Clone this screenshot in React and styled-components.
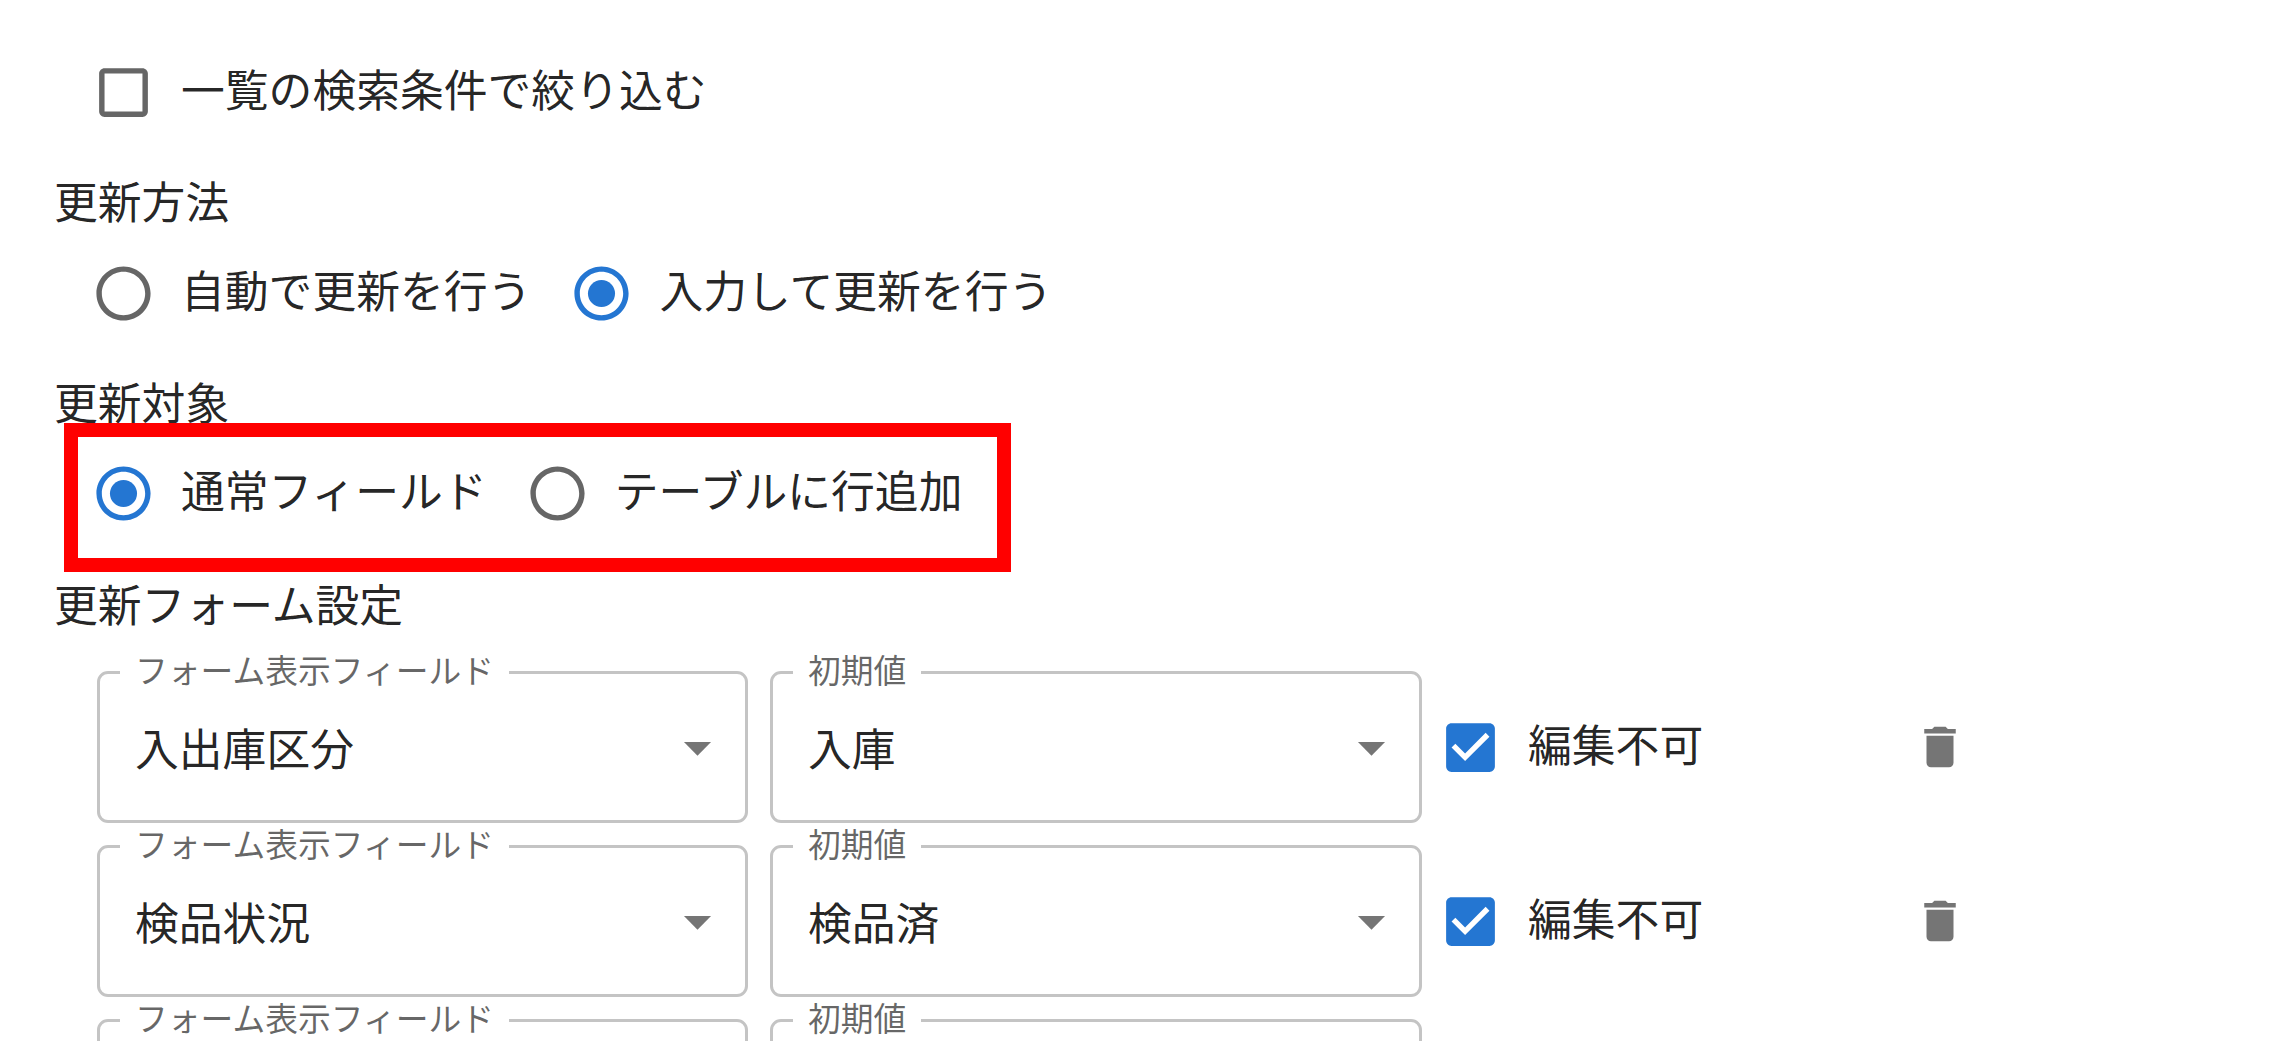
import React from "react";
import styled, { createGlobalStyle } from "styled-components";

const GlobalStyle = createGlobalStyle`
	html, body {
		margin: 0;
		padding: 0;
		background: #fff;
	}
	body {
		font-family: Roboto, "Noto Sans CJK JP", sans-serif;
		font-size: 43.8px;
		color: rgba(0, 0, 0, 0.87);
	}
`;

const Page = styled.div`
	height: 1041px;
	overflow: hidden;
	padding: 60px 0 0 54px;
	box-sizing: border-box;
`;

const Heading = styled.div`
	height: 65px;
	line-height: 65px;
	margin-top: ${(p) => p.$top}px;
`;

const OptionRow = styled.div`
	position: relative;
	display: flex;
	align-items: center;
	gap: 38px;
	height: 65px;
	margin-top: ${(p) => p.$top || 0}px;
	padding-left: 37px;
`;

const Option = styled.label`
	display: flex;
	align-items: center;
	gap: 25px;
	line-height: 67px;
	white-space: nowrap;
`;

const Highlight = styled.div`
	position: absolute;
	left: 10px;
	top: -38px;
	width: 947px;
	height: 149px;
	box-sizing: border-box;
	border: 14px solid #ff0000;
	pointer-events: none;
`;

const Icon = styled.svg`
	width: ${(p) => p.$size || 65}px;
	height: ${(p) => p.$size || 65}px;
	flex: none;
	display: block;
	fill: ${(p) => p.$color || "#666666"};
`;

const FieldList = styled.div`
	display: flex;
	flex-direction: column;
	gap: 22px;
	margin-top: 31px;
	padding-left: 43px;
`;

const FieldRow = styled.div`
	display: flex;
	align-items: center;
	flex: none;
	height: 152px;
`;

const SelectBox = styled.div`
	position: relative;
	display: flex;
	align-items: center;
	justify-content: space-between;
	width: ${(p) => p.$width}px;
	height: 152px;
	flex: none;
	box-sizing: border-box;
	margin-right: ${(p) => p.$gap}px;
	padding: 0 33px 0 35px;
	border: 3px solid #c4c4c4;
	border-radius: 11px;
`;

const FloatLabel = styled.span`
	position: absolute;
	left: 20px;
	top: -24px;
	padding: 0 15px;
	background: #fff;
	color: rgba(0, 0, 0, 0.6);
	font-size: 32.8px;
	line-height: 44px;
	white-space: nowrap;
`;

const Arrow = styled.svg`
	width: 65px;
	height: 65px;
	flex: none;
	margin-right: -18px;
	fill: #757575;
`;

const EditOption = styled(Option)`
	width: 475px;
	flex: none;
`;

const CHECK_EMPTY =
	"M19 5v14H5V5h14m0-2H5c-1.1 0-2 .9-2 2v14c0 1.1.9 2 2 2h14c1.1 0 2-.9 2-2V5c0-1.1-.9-2-2-2z";
const CHECK_FILLED =
	"M19 3H5c-1.11 0-2 .9-2 2v14c0 1.1.89 2 2 2h14c1.11 0 2-.89 2-2V5c0-1.1-.89-2-2-2zm-9 14l-5-5 1.41-1.41L10 14.17l7.59-7.59L19 8l-9 9z";
const RADIO_RING =
	"M12 2C6.48 2 2 6.48 2 12s4.48 10 10 10 10-4.48 10-10S17.52 2 12 2zm0 18c-4.42 0-8-3.58-8-8s3.58-8 8-8 8 3.58 8 8-3.58 8-8 8z";
const TRASH =
	"M6 19c0 1.1.9 2 2 2h8c1.1 0 2-.9 2-2V7H6v12zM19 4h-3.5l-1-1h-5l-1 1H5v2h14V4z";

const BLUE = "#2476d2";

function Radio({ checked, children }) {
	return (
		<Option>
			<Icon viewBox='0 0 24 24' $color={checked ? BLUE : "#666666"}>
				<path d={RADIO_RING} />
				{checked && <circle cx='12' cy='12' r='5' />}
			</Icon>
			{children}
		</Option>
	);
}

function Select({ label, value, width, gap }) {
	return (
		<SelectBox $width={width} $gap={gap}>
			<FloatLabel>{label}</FloatLabel>
			<span>{value}</span>
			<Arrow viewBox='0 0 24 24'>
				<path d='M7 10l5 5 5-5z' />
			</Arrow>
		</SelectBox>
	);
}

const rows = [
	{ field: "入出庫区分", initial: "入庫", locked: true },
	{ field: "検品状況", initial: "検品済", locked: true },
	{ field: "", initial: "", locked: false },
];

function App() {
	return (
		<>
			<GlobalStyle />
			<Page>
				<OptionRow>
					<Option>
						<Icon viewBox='0 0 24 24'>
							<path d={CHECK_EMPTY} />
						</Icon>
						一覧の検索条件で絞り込む
					</Option>
				</OptionRow>

				<Heading $top={47}>更新方法</Heading>
				<OptionRow $top={24}>
					<Radio>自動で更新を行う</Radio>
					<Radio checked>入力して更新を行う</Radio>
				</OptionRow>

				<Heading $top={47}>更新対象</Heading>
				<OptionRow $top={23}>
					<Radio checked>通常フィールド</Radio>
					<Radio>テーブルに行追加</Radio>
					<Highlight />
				</OptionRow>

				<Heading $top={49}>更新フォーム設定</Heading>
				<FieldList>
					{rows.map((row, i) => (
						<FieldRow key={i}>
							<Select
								label='フォーム表示フィールド'
								value={row.field}
								width={651}
								gap={22}
							/>
							<Select label='初期値' value={row.initial} width={652} gap={16} />
							{row.locked && (
								<>
									<EditOption>
										<Icon viewBox='0 0 24 24' $color={BLUE}>
											<path d={CHECK_FILLED} />
										</Icon>
										編集不可
									</EditOption>
									<Icon viewBox='0 0 24 24' $size={54} $color='#757575'>
										<path d={TRASH} />
									</Icon>
								</>
							)}
						</FieldRow>
					))}
				</FieldList>
			</Page>
		</>
	);
}

export default App;
